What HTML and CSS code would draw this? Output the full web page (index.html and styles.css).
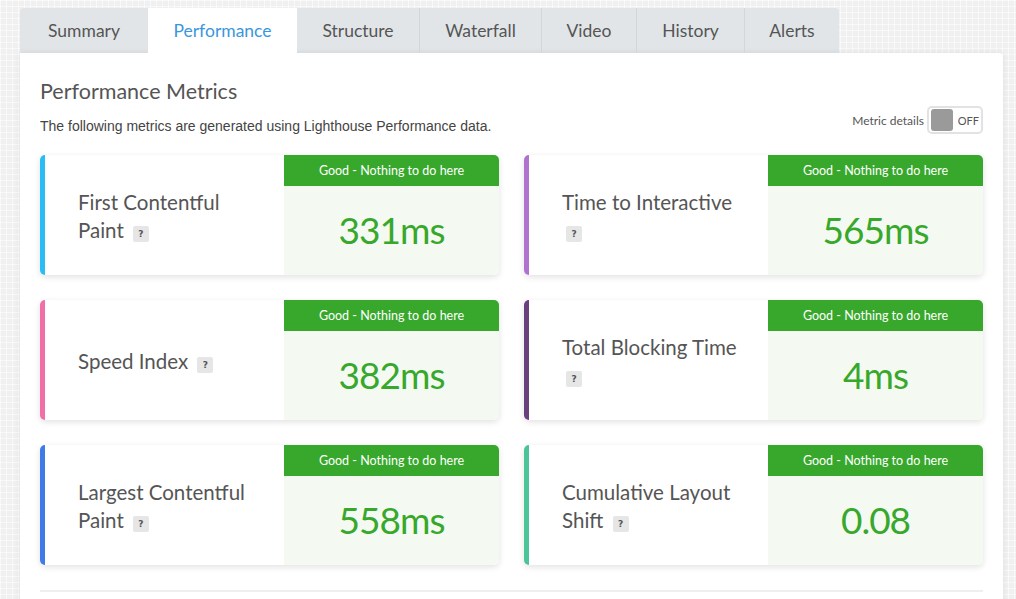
FILE: index.html
```html
<!DOCTYPE html>
<html>
<head>
<meta charset="utf-8">
<link rel="stylesheet" href="styles.css">
</head>
<body>
<div class="wrap">
  <nav class="tabs">
    <div class="tab tab-first">Summary</div>
    <div class="tab active">Performance</div>
    <div class="tab">Structure</div>
    <div class="tab">Waterfall</div>
    <div class="tab">Video</div>
    <div class="tab">History</div>
    <div class="tab tab-last">Alerts</div>
  </nav>
  <main class="panel">
    <h2 class="title">Performance Metrics</h2>
    <div class="intro">
      <p class="desc">The following metrics are generated using Lighthouse Performance data.</p>
      <div class="toggle-wrap">
        <span class="toggle-label">Metric details</span>
        <span class="toggle"><span class="knob"></span><span class="off">OFF</span></span>
      </div>
    </div>
    <div class="grid">
      <div class="card c-fcp">
        <div class="name"><span class="name-text">First Contentful Paint <span class="q">?</span></span></div>
        <div class="score"><div class="grade">Good - Nothing to do here</div><div class="value">331ms</div></div>
      </div>
      <div class="card c-tti">
        <div class="name"><span class="name-text">Time to Interactive <span class="q">?</span></span></div>
        <div class="score"><div class="grade">Good - Nothing to do here</div><div class="value">565ms</div></div>
      </div>
      <div class="card c-si">
        <div class="name"><span class="name-text">Speed Index <span class="q">?</span></span></div>
        <div class="score"><div class="grade">Good - Nothing to do here</div><div class="value">382ms</div></div>
      </div>
      <div class="card c-tbt">
        <div class="name"><span class="name-text">Total Blocking Time <span class="q">?</span></span></div>
        <div class="score"><div class="grade">Good - Nothing to do here</div><div class="value">4ms</div></div>
      </div>
      <div class="card c-lcp">
        <div class="name"><span class="name-text">Largest Contentful Paint <span class="q">?</span></span></div>
        <div class="score"><div class="grade">Good - Nothing to do here</div><div class="value">558ms</div></div>
      </div>
      <div class="card c-cls">
        <div class="name"><span class="name-text">Cumulative Layout Shift <span class="q">?</span></span></div>
        <div class="score"><div class="grade">Good - Nothing to do here</div><div class="value">0.08</div></div>
      </div>
    </div>
    <hr class="rule">
  </main>
</div>
</body>
</html>
```

FILE: styles.css
```css
* { box-sizing: border-box; }
html, body { margin: 0; height: 100%; }
body {
  background-color: #f0f0f0;
  background-image:
    linear-gradient(rgba(255,255,255,0.5) 1px, transparent 1px),
    linear-gradient(90deg, rgba(255,255,255,0.5) 1px, transparent 1px);
  background-size: 6px 6px;
  font-family: Lato, "Open Sans", sans-serif;
  color: #555;
  overflow: hidden;
}
.wrap {
  margin: 8px 0 0 20px;
  width: 983px;
}
.tabs {
  display: flex;
  width: 819px;
  height: 45px;
  background: #e1e5e8;
  border-radius: 4px 4px 0 0;
}
.tab {
  display: flex;
  align-items: center;
  justify-content: center;
  font-size: 17.5px;
  color: #555;
  border-left: 1px solid #d3d7da;
  height: 100%;
}
.tab-first { border-left: none; width: 128px; border-radius: 4px 0 0 0; }
.tab:nth-child(2) { width: 149px; }
.tab:nth-child(3) { width: 122px; }
.tab:nth-child(4) { width: 122px; }
.tab:nth-child(5) { width: 95px; }
.tab:nth-child(6) { width: 108px; }
.tab-last { width: 95px; border-radius: 0 4px 0 0; }
.tab.active { background: #fff; color: #3a97dd; border-left: none; }
.tab.active + .tab { border-left: none; }
.panel {
  background: #fff;
  border-radius: 0 4px 0 0;
  box-shadow: 0 0 6px rgba(0,0,0,0.08);
  padding: 23px 20px 0 20px;
  height: 560px;
}
.title {
  margin: 0;
  font-weight: 400;
  font-size: 21.5px;
  line-height: 30px;
  color: #555;
}
.intro {
  display: flex;
  justify-content: space-between;
  align-items: flex-end;
  margin-top: 0;
}
.desc {
  margin: 0;
  font-family: "Liberation Sans", Arial, sans-serif;
  font-size: 14px;
  color: #444;
  line-height: 16px;
}
.toggle-wrap { display: flex; align-items: center; gap: 3px; }
.toggle-label { font-size: 12px; color: #555; }
.toggle {
  display: flex;
  align-items: center;
  width: 56px;
  height: 28px;
  border: 2px solid #e2e2e2;
  border-radius: 5px;
  padding: 0 2px;
  gap: 5px;
}
.knob { width: 22px; height: 22px; background: #9a9a9a; border-radius: 3px; }
.off { font-size: 11px; color: #555; }
.grid {
  display: grid;
  grid-template-columns: 459px 459px;
  column-gap: 25px;
  row-gap: 25px;
  margin-top: 21px;
}
.card {
  display: flex;
  height: 120px;
  border-radius: 5px;
  border-left: 5px solid #2bbcf5;
  box-shadow: 0 2px 6px rgba(0,0,0,0.12);
  overflow: hidden;
  background: #fff;
}
.c-fcp { border-left-color: #2bbcf5; }
.c-tti { border-left-color: #b072cf; }
.c-si  { border-left-color: #f26ea6; }
.c-tbt { border-left-color: #6b3f7e; }
.c-lcp { border-left-color: #3f7ae8; }
.c-cls { border-left-color: #4cc49a; }
.name {
  flex: 1;
  display: flex;
  align-items: center;
  padding-left: 33px;
  padding-right: 14px;
  padding-top: 1px;
  font-size: 20.5px;
  line-height: 28px;
  color: #555;
}
.name-text { display: block; }
.q {
  display: inline-block;
  width: 16px;
  height: 16px;
  background: #e6e6e6;
  border-radius: 2px;
  font-family: "DejaVu Sans", sans-serif;
  font-weight: bold;
  font-size: 9px;
  line-height: 16px;
  text-align: center;
  color: #555;
  vertical-align: 1px;
  margin-left: 4px;
}
.score {
  width: 215px;
  display: flex;
  flex-direction: column;
  background: #f4faf2;
}
.grade {
  height: 31px;
  background: #37a82b;
  color: #fff;
  font-size: 12.5px;
  display: flex;
  align-items: center;
  justify-content: center;
}
.value {
  flex: 1;
  display: flex;
  align-items: center;
  justify-content: center;
  font-size: 37px;
  letter-spacing: -1px;
  color: #37a82b;
  padding-bottom: 2px;
}
.rule {
  border: none;
  border-top: 2px solid #efefef;
  margin: 25px 0 0 0;
}
```
